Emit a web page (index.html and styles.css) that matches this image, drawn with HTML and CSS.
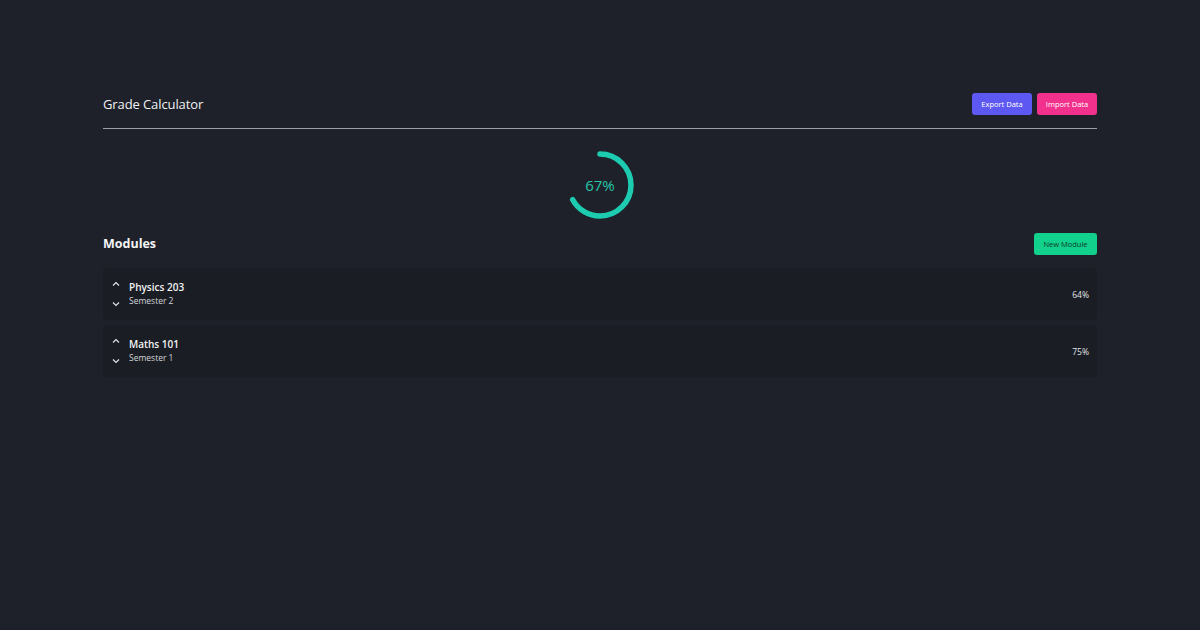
FILE: index.html
```html
<!DOCTYPE html>
<html>
<head>
<meta charset="utf-8">
<link rel="stylesheet" href="styles.css">
</head>
<body>
<div class="page">
  <header class="header">
    <h1 class="title">Grade Calculator</h1>
    <div class="actions">
      <button class="btn btn-export">Export Data</button>
      <button class="btn btn-import">Import Data</button>
    </div>
  </header>
  <div class="ring-wrap">
    <div class="ring">
      <svg width="70" height="70" viewBox="0 0 70 70">
        <circle cx="35" cy="35" r="31" fill="none" stroke="#1ccbb0" stroke-width="5.5" stroke-linecap="round"
          stroke-dasharray="130.5 200" transform="rotate(-90 35 35)"/>
      </svg>
      <span class="ring-label">67%</span>
    </div>
  </div>
  <div class="modules-head">
    <h2 class="modules-title">Modules</h2>
    <button class="btn btn-new">New Module</button>
  </div>
  <div class="list">
    <div class="card">
      <div class="arrows">
        <svg class="chev" width="8" height="6" viewBox="0 0 8 6"><path d="M1 4.5 L4 1.5 L7 4.5" fill="none" stroke="#e6e8ec" stroke-width="1.1"/></svg>
        <svg class="chev" width="8" height="6" viewBox="0 0 8 6"><path d="M1 1.5 L4 4.5 L7 1.5" fill="none" stroke="#e6e8ec" stroke-width="1.1"/></svg>
      </div>
      <div class="info">
        <div class="name">Physics 203</div>
        <div class="sem">Semester 2</div>
      </div>
      <div class="pct">64%</div>
    </div>
    <div class="card">
      <div class="arrows">
        <svg class="chev" width="8" height="6" viewBox="0 0 8 6"><path d="M1 4.5 L4 1.5 L7 4.5" fill="none" stroke="#e6e8ec" stroke-width="1.1"/></svg>
        <svg class="chev" width="8" height="6" viewBox="0 0 8 6"><path d="M1 1.5 L4 4.5 L7 1.5" fill="none" stroke="#e6e8ec" stroke-width="1.1"/></svg>
      </div>
      <div class="info">
        <div class="name">Maths 101</div>
        <div class="sem">Semester 1</div>
      </div>
      <div class="pct">75%</div>
    </div>
  </div>
</div>
</body>
</html>
```
FILE: styles.css
```css
* { box-sizing: border-box; }
html, body {
  margin: 0;
  padding: 0;
  background: #1e2129;
  color: #e8eaee;
  font-family: "Open Sans", "Noto Sans", sans-serif;
}
.page {
  width: 994px;
  margin: 0 auto;
  padding-top: 93px;
}
.header {
  display: flex;
  justify-content: space-between;
  align-items: center;
  padding-bottom: 13px;
  border-bottom: 1px solid #9aa0aa;
}
.title {
  margin: 0;
  font-size: 13px;
  font-weight: 400;
  color: #f0f2f5;
  letter-spacing: -0.1px;
}
.actions {
  display: flex;
  gap: 5px;
}
.btn {
  border: none;
  border-radius: 3px;
  font-family: inherit;
  font-size: 7.5px;
  color: #fff;
  height: 22px;
  padding: 0;
  white-space: nowrap;
  cursor: pointer;
}
.btn-export { background: #5d58f2; width: 60px; }
.btn-import { background: #f2318d; width: 60px; }
.ring-wrap {
  display: flex;
  justify-content: center;
  padding-top: 21px;
}
.ring {
  position: relative;
  width: 70px;
  height: 70px;
}
.ring svg { display: block; }
.ring-label {
  position: absolute;
  inset: 0;
  display: flex;
  align-items: center;
  justify-content: center;
  font-size: 15px;
  font-weight: 400;
  color: #27c6aa;
}
.modules-head {
  display: flex;
  justify-content: space-between;
  align-items: center;
  margin-top: 11px;
}
.modules-title {
  margin: 0;
  font-size: 12.5px;
  font-weight: 700;
  color: #f3f4f6;
}
.btn-new {
  background: #12d18c;
  color: #0d3b2b;
  width: 63px;
  margin-top: 2px;
}
.list {
  margin-top: 13px;
  display: flex;
  flex-direction: column;
  gap: 5px;
}
.card {
  display: flex;
  align-items: center;
  height: 52px;
  background: #1a1d23;
  border-radius: 3px;
  padding: 0 8px 0 9px;
}
.arrows {
  display: flex;
  flex-direction: column;
  gap: 14px;
  margin-right: 9px;
  margin-top: -1px;
}
.chev { display: block; }
.info {
  flex: 1;
  display: flex;
  flex-direction: column;
  gap: 1px;
  margin-top: -2px;
}
.name {
  font-size: 10px;
  font-weight: 600;
  color: #f2f3f5;
}
.sem {
  font-size: 8.5px;
  color: #d2d5da;
}
.pct {
  font-size: 8.5px;
  color: #e3e5e9;
}
```
